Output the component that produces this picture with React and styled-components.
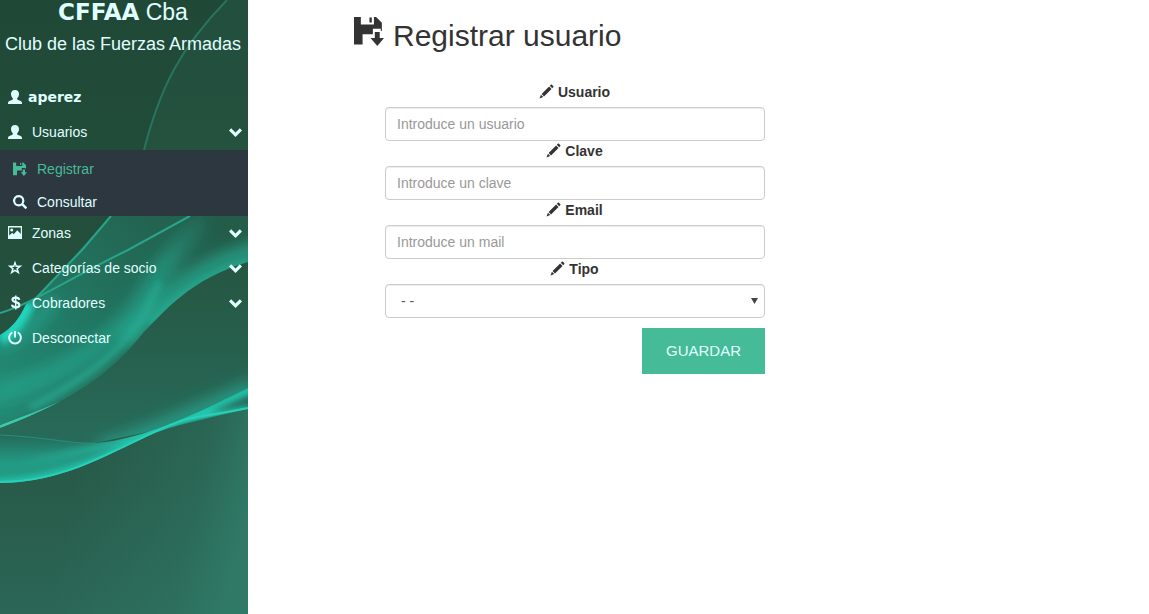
import React from 'react';
import styled, { createGlobalStyle } from 'styled-components';

const GlobalStyle = createGlobalStyle`
  *, *::before, *::after { box-sizing: border-box; }
  body {
    margin: 0;
    font-family: "Liberation Sans", Arial, sans-serif;
    font-size: 14px;
    line-height: 20px;
    color: #333;
    background: #fff;
  }
`;

const Page = styled.div`
  display: flex;
  min-height: 100vh;
`;

const Sidebar = styled.aside`
  position: relative;
  flex: 0 0 248px;
  overflow: hidden;
  color: lightcyan;
  background: #265a49;
`;

const Backdrop = styled.svg`
  position: absolute;
  inset: 0;
  width: 100%;
  height: 100%;
`;

const SidebarContent = styled.div`
  position: relative;
`;

const Brand = styled.header`
  display: flex;
  flex-direction: column;
  gap: 8px;
  padding-bottom: 24px;
  text-align: center;
  white-space: nowrap;
`;

const BrandName = styled.div`
  padding-right: 2px;
  font-size: 23px;
  line-height: 24px;
`;

const Heavy = styled.strong`
  font-family: "DejaVu Sans", "Liberation Sans", sans-serif;
  font-weight: 700;
  line-height: 1;
`;

const BrandText = styled.div`
  padding-right: 2px;
  font-size: 18px;
  line-height: 24px;
`;

const UserRow = styled.div`
  display: flex;
  align-items: center;
  gap: 6px;
  height: 35px;
  padding: 0 8px 2px;
`;

const Menu = styled.ul`
  margin: 0;
  padding: 0;
  list-style: none;
`;

const MenuLink = styled.a`
  display: flex;
  align-items: center;
  gap: 10px;
  height: 35px;
  padding: 0 6px 2px 8px;
  color: inherit;
  text-decoration: none;
`;

const MenuLabel = styled.span`
  flex: 1;
`;

const SubMenu = styled(Menu)`
  background: #2c3740;
`;

const SubLink = styled(MenuLink)`
  height: 33px;
  padding: 5px 8px 0 13px;
  color: ${(p) => (p.$active ? '#46bb97' : 'lightcyan')};
`;

const Main = styled.main`
  flex: 1;
  min-width: 0;
  padding: 16px 24px 24px 106px;
`;

const Title = styled.h1`
  display: flex;
  align-items: flex-start;
  gap: 9px;
  margin: 0 0 26px;
  font-size: 30px;
  font-weight: 400;
  line-height: 40px;
`;

const Form = styled.form`
  max-width: 411px;
  padding-left: 31px;
`;

const Label = styled.label`
  display: flex;
  align-items: center;
  justify-content: center;
  gap: 4px;
  padding-bottom: 5px;
  font-weight: 700;
`;

const Input = styled.input`
  display: block;
  width: 100%;
  height: 34px;
  padding: 6px 11px;
  font: inherit;
  color: #555;
  background: #fff;
  border: 1px solid #ccc;
  border-radius: 4px;
  box-shadow: inset 0 1px 1px rgba(0, 0, 0, 0.075);
  &::placeholder { color: #999; opacity: 1; }
`;

const SelectBox = styled.div`
  position: relative;
`;

const Select = styled(Input)`
  padding: 6px 15px;
  appearance: none;
`;

const SelectArrow = styled.svg`
  position: absolute;
  top: 14px;
  right: 7px;
  pointer-events: none;
`;

const Actions = styled.div`
  display: flex;
  justify-content: flex-end;
  padding-top: 10px;
`;

const SaveButton = styled.button`
  padding: 12px 24px;
  border: 0;
  font: inherit;
  font-size: 15px;
  line-height: 22px;
  color: lightcyan;
  background: #45bb98;
`;

const ICONS = {
  user: <path d="M7 0C9.400 0 11 1.600 11 4c0 1.800-.8 3.500-1.900 4.400v.8c.3.500 1.300.8 2.400 1.300 1.700.7 2.500 1.200 2.500 2.500v1H0V13c0-1.300.8-1.800 2.500-2.500 1.100-.5 2.100-.8 2.400-1.300v-.8C3.800 7.500 3 5.800 3 4c0-2.400 1.600-4 4-4z" />,
  save: <path fillRule="evenodd" d="M0 .5H3.200V4H9.300V.5H10.300L13 3.200V7H12.500V6H8.800V8.500H4V13.300H0ZM7.200.7H8.300V3H7.200ZM9.700 7.500H12V10.300H14L10.900 14 7.700 10.300H9.700Z" />,
  search: <path fillRule="evenodd" d="M5.700 0a5.700 5.700 0 0 1 4.800 8.800l3.300 3.300c.3.300.3.600 0 .9l-.8.800c-.3.300-.6.300-.9 0L8.800 10.500A5.700 5.700 0 1 1 5.700 0zm0 2.200a3.500 3.500 0 1 0 0 7 3.500 3.500 0 0 0 0-7z" />,
  picture: <path fillRule="evenodd" d="M0 0H14V13H0ZM1.200 1.500V9.500L4.300 6.700 5.700 8.200 9.300 4.300 12.800 8V1.500ZM3.700 2.500a1.500 1.500 0 1 1 0 3 1.500 1.500 0 0 1 0-3z" />,
  star: <path fillRule="evenodd" d="M7-.5L8.700 4.500H14.300L10 7.900 11.700 13.300 7 10.200 2.300 13.300 4 7.900-.3 4.500H5.300ZM7 3.800L6.300 6.100H4L5.800 7.500 5.100 9.800 7 8.400 8.900 9.800 8.200 7.500 10 6.100H7.700Z" />,
  dollar: (
    <g fill="none" stroke="currentColor">
      <path strokeWidth="2.200" d="M11.200 3.800C11 2.400 9.900 1.600 7.700 1.600S4.500 2.500 4.500 3.800C4.500 6.800 11.300 5.500 11.300 8.900c0 1.500-1.200 2.400-3.500 2.400S4.200 10.300 4.100 8.800" />
      <path strokeWidth="1.500" d="M7.700-.5V13.500" />
    </g>
  ),
  power: (
    <g fill="none" stroke="currentColor" strokeWidth="2">
      <path d="M4.300 1.400A5.900 5.900 0 1 0 9.700 1.400" />
      <path d="M7 0V6.500" />
    </g>
  ),
  chevron: <path d="M3.200 3.300L7.500 7.600 11.800 3.300 14 5.500 7.500 12 1 5.500Z" />,
  pencil: <path d="M10.800-.2c.3-.4.700-.4 1.100 0l1.300 1.300c.4.400.4.800 0 1.100L12.200 3.200 9.800.8ZM9.100 1.500L11.500 3.900 4 11.400 1.600 9ZM.9 9.700L3.300 12.100-.5 13.500Z" />,
};

function Icon({ name, size = 14 }) {
  return (
    <svg width={size} height={size} viewBox="0 0 14 14" fill="currentColor" overflow="visible" aria-hidden="true">
      {ICONS[name]}
    </svg>
  );
}

function Waves() {
  return (
    <Backdrop viewBox="0 0 248 614" preserveAspectRatio="xMidYMin slice" aria-hidden="true">
      <defs>
        <linearGradient id="base" x1="0" y1="0" x2="0" y2="1">
          <stop offset="0" stopColor="#204837" />
          <stop offset="0.4" stopColor="#234f3c" />
          <stop offset="0.8" stopColor="#285b4a" />
          <stop offset="1" stopColor="#2b6656" />
        </linearGradient>
        <linearGradient id="glow" x1="0" y1="0.3" x2="1" y2="0.5">
          <stop offset="0.3" stopColor="#307c69" stopOpacity="0" />
          <stop offset="0.8" stopColor="#307c69" stopOpacity="0.4" />
          <stop offset="1" stopColor="#307c69" stopOpacity="0.9" />
        </linearGradient>
        <linearGradient id="middle" x1="0" y1="0" x2="0" y2="1">
          <stop offset="0" stopColor="#255541" />
          <stop offset="1" stopColor="#286b5a" />
        </linearGradient>
        <linearGradient id="upper" gradientUnits="userSpaceOnUse" x1="210" y1="216" x2="0" y2="400">
          <stop offset="0" stopColor="#235c49" />
          <stop offset="0.45" stopColor="#22705c" />
          <stop offset="1" stopColor="#238a74" />
        </linearGradient>
        <linearGradient id="lower" gradientUnits="userSpaceOnUse" x1="0" y1="435" x2="0" y2="475">
          <stop offset="0" stopColor="#256a59" />
          <stop offset="0.7" stopColor="#239a84" />
          <stop offset="1" stopColor="#239a84" />
        </linearGradient>
        <linearGradient id="streak" gradientUnits="userSpaceOnUse" x1="205" y1="216" x2="100" y2="350">
          <stop offset="0" stopColor="#25a890" stopOpacity="0.1" />
          <stop offset="0.4" stopColor="#25a890" stopOpacity="0.7" />
          <stop offset="1" stopColor="#25a890" stopOpacity="0.7" />
        </linearGradient>
        <linearGradient id="fold" gradientUnits="userSpaceOnUse" x1="20" y1="0" x2="150" y2="0">
          <stop offset="0" stopColor="#24c8af" stopOpacity="0" />
          <stop offset="1" stopColor="#24c8af" />
        </linearGradient>
        <filter id="soft" filterUnits="userSpaceOnUse" x="-40" y="180" width="330" height="330"><feGaussianBlur stdDeviation="8" /></filter>
        <filter id="fine" filterUnits="userSpaceOnUse" x="-40" y="180" width="330" height="330"><feGaussianBlur stdDeviation="3" /></filter>
        <clipPath id="upperClip">
          <path d="M0 335C12 328 20 318 26 304L35 299L111 216H248V262C190 279 165 311 143 333C113 371 75 400 0 428Z" />
        </clipPath>
        <clipPath id="middleClip">
          <path d="M248 262C190 279 165 311 143 333C113 371 75 400 0 428V435C55 438 70 444 95 443L180 425L248 409Z" />
        </clipPath>
        <clipPath id="lowerClip">
          <path d="M0 435C55 438 70 444 95 443C145 440 205 409 248 388V409C190 421 170 427 150 435C105 456 60 483 0 483Z" />
        </clipPath>
      </defs>
      <rect width="248" height="614" fill="url(#base)" />
      <path d="M227 0C180 48 160 88 144 150H248V0Z" fill="#2b6350" opacity="0.25" />
      <rect y="395" width="248" height="219" fill="url(#glow)" />
      <path d="M227 0C180 48 160 88 144 150" fill="none" stroke="#28745f" strokeWidth="2" />

      <g clipPath="url(#middleClip)">
        <rect y="255" width="248" height="190" fill="url(#middle)" />
        <path d="M100 450C150 437 200 410 258 388" fill="none" stroke="#25a08a" strokeWidth="16" filter="url(#soft)" />
      </g>

      <g clipPath="url(#upperClip)">
        <rect y="210" width="248" height="230" fill="url(#upper)" />
        <g fill="none" filter="url(#soft)">
          <path d="M-10 395C70 375 125 335 148 292C165 262 185 240 205 216" stroke="url(#streak)" strokeWidth="18" />
          <path d="M265 248C190 266 165 302 125 342" stroke="#25a88f" strokeWidth="14" />
          <path d="M-5 345C20 340 35 325 55 300" stroke="#23a68e" strokeWidth="10" />
          <path d="M150 345C110 385 75 400 0 432" stroke="#256a57" strokeWidth="6" />
        </g>
        <g fill="none" filter="url(#fine)">
          <path d="M30 408C75 385 108 360 128 337S148 302 160 282" stroke="#25a991" strokeWidth="5" />
          <path d="M250 261C190 278 165 310 150 323" stroke="#25b299" strokeWidth="5" />
          <path d="M0 339C14 330 23 318 29 302" stroke="#24d5bd" strokeWidth="13" />
        </g>
        <path d="M0 427C20 419 40 412 60 403" fill="none" stroke="#3cc9ae" strokeWidth="3" />
      </g>
      <g fill="none" stroke="#29a38a" strokeWidth="2">
        <path d="M0 313C30 305 70 278 128 250L190 216" />
        <path d="M35 299L82 250L111 216" />
      </g>

      <g clipPath="url(#lowerClip)">
        <rect y="380" width="248" height="110" fill="url(#lower)" />
        <g fill="none" filter="url(#fine)">
          <path d="M0 460C75 459 125 440 160 428S225 400 255 387" stroke="url(#fold)" strokeWidth="9" />
          <path d="M-10 483C60 483 105 456 150 435S190 421 250 409" stroke="#24ceb5" strokeWidth="6" />
        </g>
      </g>
      <path d="M0 435C55 438 70 444 95 443" fill="none" stroke="#298e79" strokeWidth="1" />
      <path d="M0 482C60 482 105 455 150 434S190 420 248 408" fill="none" stroke="#27d0b7" strokeWidth="2" />
    </Backdrop>
  );
}

const MENU = [
  {
    icon: 'user',
    label: 'Usuarios',
    expandable: true,
    children: [
      { icon: 'save', label: 'Registrar', active: true },
      { icon: 'search', label: 'Consultar' },
    ],
  },
  { icon: 'picture', label: 'Zonas', expandable: true },
  { icon: 'star', label: 'Categorías de socio', expandable: true },
  { icon: 'dollar', label: 'Cobradores', expandable: true },
  { icon: 'power', label: 'Desconectar' },
];

const FIELDS = [
  { id: 'usuario', label: 'Usuario', type: 'text', placeholder: 'Introduce un usuario' },
  { id: 'clave', label: 'Clave', type: 'password', placeholder: 'Introduce un clave' },
  { id: 'email', label: 'Email', type: 'email', placeholder: 'Introduce un mail' },
];

export default function App() {
  return (
    <>
      <GlobalStyle />
      <Page>
        <Sidebar>
          <Waves />
          <SidebarContent>
            <Brand>
              <BrandName><Heavy>CFFAA</Heavy> Cba</BrandName>
              <BrandText>Club de las Fuerzas Armadas</BrandText>
            </Brand>
            <UserRow><Icon name="user" /><Heavy>aperez</Heavy></UserRow>
            <nav>
              <Menu>
                {MENU.map((item) => (
                  <li key={item.label}>
                    <MenuLink href="#">
                      <Icon name={item.icon} />
                      <MenuLabel>{item.label}</MenuLabel>
                      {item.expandable && <Icon name="chevron" />}
                    </MenuLink>
                    {item.children && (
                      <SubMenu>
                        {item.children.map((child) => (
                          <li key={child.label}>
                            <SubLink href="#" $active={child.active}>
                              <Icon name={child.icon} />
                              <MenuLabel>{child.label}</MenuLabel>
                            </SubLink>
                          </li>
                        ))}
                      </SubMenu>
                    )}
                  </li>
                ))}
              </Menu>
            </nav>
          </SidebarContent>
        </Sidebar>
        <Main>
          <Title><Icon name="save" size={30} />Registrar usuario</Title>
          <Form>
            {FIELDS.map((field) => (
              <div key={field.id}>
                <Label htmlFor={field.id}><Icon name="pencil" />{field.label}</Label>
                <Input id={field.id} type={field.type} placeholder={field.placeholder} />
              </div>
            ))}
            <Label htmlFor="tipo"><Icon name="pencil" />Tipo</Label>
            <SelectBox>
              <Select as="select" id="tipo">
                <option>- -</option>
              </Select>
              <SelectArrow width="7" height="6" viewBox="0 0 7 6" aria-hidden="true">
                <path d="M0 0H7L3.500 6Z" fill="#444" />
              </SelectArrow>
            </SelectBox>
            <Actions>
              <SaveButton type="button">GUARDAR</SaveButton>
            </Actions>
          </Form>
        </Main>
      </Page>
    </>
  );
}
